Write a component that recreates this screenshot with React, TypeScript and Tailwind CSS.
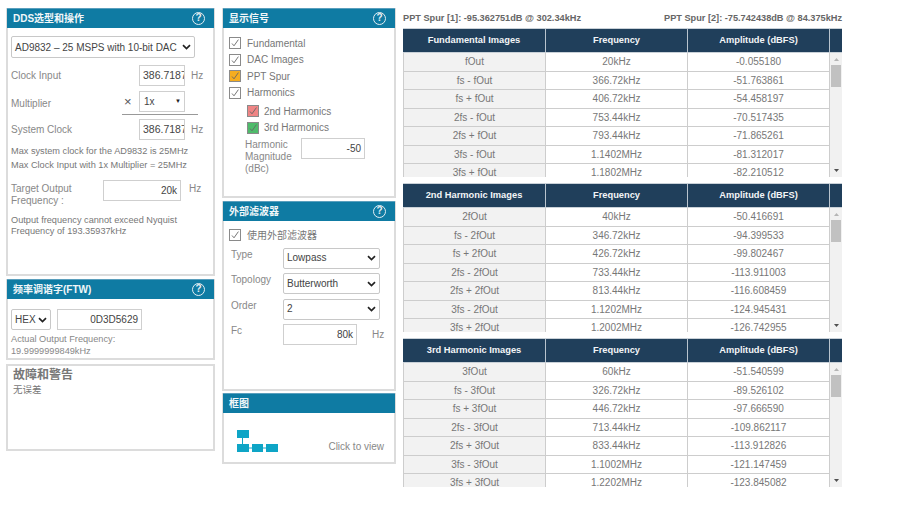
import React from "react"

const font = "font-['Liberation_Sans','Noto_Sans_CJK_SC',sans-serif]"

const tables = [
  {
    title: "Fundamental Images",
    rows: [
      ["fOut", "20kHz", "-0.055180"],
      ["fs - fOut", "366.72kHz", "-51.763861"],
      ["fs + fOut", "406.72kHz", "-54.458197"],
      ["2fs - fOut", "753.44kHz", "-70.517435"],
      ["2fs + fOut", "793.44kHz", "-71.865261"],
      ["3fs - fOut", "1.1402MHz", "-81.312017"],
      ["3fs + fOut", "1.1802MHz", "-82.210512"],
    ],
  },
  {
    title: "2nd Harmonic Images",
    rows: [
      ["2fOut", "40kHz", "-50.416691"],
      ["fs - 2fOut", "346.72kHz", "-94.399533"],
      ["fs + 2fOut", "426.72kHz", "-99.802467"],
      ["2fs - 2fOut", "733.44kHz", "-113.911003"],
      ["2fs + 2fOut", "813.44kHz", "-116.608459"],
      ["3fs - 2fOut", "1.1202MHz", "-124.945431"],
      ["3fs + 2fOut", "1.2002MHz", "-126.742955"],
    ],
  },
  {
    title: "3rd Harmonic Images",
    rows: [
      ["3fOut", "60kHz", "-51.540599"],
      ["fs - 3fOut", "326.72kHz", "-89.526102"],
      ["fs + 3fOut", "446.72kHz", "-97.666590"],
      ["2fs - 3fOut", "713.44kHz", "-109.862117"],
      ["2fs + 3fOut", "833.44kHz", "-113.912826"],
      ["3fs - 3fOut", "1.1002MHz", "-121.147459"],
      ["3fs + 3fOut", "1.2202MHz", "-123.845082"],
    ],
  },
]

function Help() {
  return (
    <span className="flex h-[13px] w-[13px] items-center justify-center rounded-full border-[1.5px] border-[#e4eef3] text-[10px] font-bold leading-none text-[#e4eef3]">
      ?
    </span>
  )
}

function Panel({
  title,
  help = true,
  className,
  children,
}: {
  title: string
  help?: boolean
  className: string
  children: React.ReactNode
}) {
  return (
    <div className={`flex flex-col border-x-2 border-b-2 border-[#dcdcdc] ${className}`}>
      <div className="-mx-[1px] flex h-[20px] shrink-0 items-center justify-between border-t border-[#5a9fbd] bg-[#0f7ba3] pb-[1px] pl-[6px] pr-[9px] text-[10px] font-bold text-[#f2f7f9]">
        <span>{title}</span>
        {help && <Help />}
      </div>
      {children}
    </div>
  )
}

function Chevron() {
  return (
    <svg width="9" height="6" viewBox="0 0 9 6" className="shrink-0">
      <path d="M1 1.2 L4.5 4.6 L8 1.2" fill="none" stroke="#222" strokeWidth="1.7" />
    </svg>
  )
}

function Select({ value, className }: { value: string; className: string }) {
  return (
    <div
      className={`flex h-[21px] items-center justify-between whitespace-nowrap rounded-[2px] border border-[#c8c8c8] bg-white pl-[3px] pr-[3px] text-[10px] text-[#444] ${className}`}
    >
      <span>{value}</span>
      <Chevron />
    </div>
  )
}

function Input({ value, className }: { value: string; className: string }) {
  return (
    <div
      className={`flex h-[21px] items-center justify-end overflow-hidden whitespace-nowrap border border-[#cfcfcf] bg-white pr-[3px] text-[10px] text-[#444] ${className}`}
    >
      {value}
    </div>
  )
}

// the clock boxes are too narrow for their value, the last digit gets cut
function ClockInput({ value }: { value: string }) {
  return (
    <div className="flex h-[21px] w-[46px] items-center border border-[#cfcfcf] bg-white pl-[3px] text-[10.5px] text-[#444]">
      <span className="w-[41px] overflow-hidden whitespace-nowrap">{value}</span>
    </div>
  )
}

function Check({ color = "bg-white", label, gap = "gap-[6px]" }: { color?: string; label: string; gap?: string }) {
  return (
    <div className={`flex h-[16.5px] items-center text-[10px] text-[#777] ${gap}`}>
      <span className={`flex h-[12px] w-[12px] items-center justify-center border border-[#8a8a8a] ${color}`}>
        <svg width="10" height="10" viewBox="0 0 10 10">
          <path d="M2 5.5 L4 7.8 L8.4 1.6" fill="none" stroke="#666" strokeWidth="0.9" />
        </svg>
      </span>
      {label}
    </div>
  )
}

function FilterRow({ label, children }: { label: string; children: React.ReactNode }) {
  return (
    <div className="flex h-[25.5px] text-[10px] leading-[14px] text-[#888]">
      <span className="w-[52px]">{label}</span>
      {children}
    </div>
  )
}

function Scrollbar() {
  return (
    <div className="flex w-[12px] flex-col items-center bg-[#f1f1f1]">
      <svg width="7" height="5" viewBox="0 0 7 5" className="mt-[4px] shrink-0">
        <path d="M3.5 1 L6 4 H1 Z" fill="#b5b5b5" />
      </svg>
      <div className="mt-[3px] h-[22px] w-[10px] bg-[#c1c1c1]" />
      <div className="flex-1" />
      <svg width="7" height="5" viewBox="0 0 7 5" className="mb-[4px] shrink-0">
        <path d="M1 1 H6 L3.5 4 Z" fill="#505050" />
      </svg>
    </div>
  )
}

function ImageTable({ title, rows }: { title: string; rows: string[][] }) {
  return (
    <div className="w-[439px]">
      <div className="flex h-[25px] border-y border-[#c9d1d8] bg-[#203f5b] text-[9.3px] font-bold text-[#f3f5f7]">
        <div className="flex w-[143px] items-center justify-center border-r border-[#b9c4ce]">{title}</div>
        <div className="flex w-[142px] items-center justify-center border-r border-[#b9c4ce]">Frequency</div>
        <div className="flex w-[142px] items-center justify-center border-r border-[#b9c4ce]">Amplitude (dBFS)</div>
        <div className="w-[12px]" />
      </div>
      <div className="flex h-[124px]">
        <div className="w-[427px] overflow-hidden">
          {rows.map((r) => (
            <div key={r[0]} className="flex h-[18.5px] border-b border-[#cdcdcd] text-[10px] text-[#777]">
              <div className="flex w-[143px] items-center justify-center border-l border-r border-[#cdcdcd] bg-[#f2f2f2]">
                {r[0]}
              </div>
              <div className="flex w-[142px] items-center justify-center border-r border-[#cdcdcd]">{r[1]}</div>
              <div className="flex w-[142px] items-center justify-center border-r border-[#cdcdcd]">{r[2]}</div>
            </div>
          ))}
        </div>
        <Scrollbar />
      </div>
    </div>
  )
}

export default function App() {
  return (
    <div className={`flex h-[513px] w-[900px] gap-[7px] overflow-hidden bg-white pl-[6px] pt-[8px] ${font}`}>
      {/* Left column */}
      <div className="flex w-[209px] flex-col">
        <Panel title="DDS选型和操作" className="h-[268px]">
          <div className="flex flex-col px-[3px] pt-[8px]">
            <Select value="AD9832 – 25 MSPS with 10-bit DAC" className="h-[22px] w-[184px]" />
            <div className="mt-[7px] flex h-[21px] items-center text-[10px] text-[#888]">
              <span className="w-[128px]">Clock Input</span>
              <ClockInput value="386.7187" />
              <span className="ml-[6px]">Hz</span>
            </div>
            <div className="mt-[5px] flex h-[21px] items-center text-[10px] text-[#888]">
              <span className="w-[113px] pt-[3px]">Multiplier</span>
              <span className="w-[15px] text-[13px] leading-none text-[#555]">×</span>
              <div className="flex h-[21px] w-[46px] items-center justify-between border border-[#cfcfcf] bg-white pl-[4px] pr-[3px] text-[10px] text-[#444]">
                1x
                <span className="text-[6px] text-[#222]">▼</span>
              </div>
            </div>
            <div className="ml-[111px] mt-[2px] h-px w-[76px] bg-[#999]" />
            <div className="mt-[4px] flex h-[21px] items-center text-[10px] text-[#888]">
              <span className="w-[128px]">System Clock</span>
              <ClockInput value="386.7187" />
              <span className="ml-[6px]">Hz</span>
            </div>
            <div className="mt-[5px] text-[9.2px] leading-[13.5px] text-[#777]">
              Max system clock for the AD9832 is 25MHz
              <br />
              Max Clock Input with 1x Multiplier = 25MHz
            </div>
            <div className="mt-[8px] flex text-[10px] leading-[11.5px] text-[#888]">
              <span className="w-[92px] pt-[3px]">
                Target Output
                <br />
                Frequency :
              </span>
              <Input value="20k" className="w-[78px]" />
              <span className="ml-[8px] pt-[3px]">Hz</span>
            </div>
            <div className="mt-[9px] text-[9.2px] leading-[11px] text-[#777]">
              Output frequency cannot exceed Nyquist
              <br />
              Frequency of 193.35937kHz
            </div>
          </div>
        </Panel>
        <Panel title="频率调谐字(FTW)" className="mt-[3px] h-[81px]">
          <div className="flex flex-col px-[3px] pt-[10px]">
            <div className="flex gap-[6px]">
              <Select value="HEX" className="w-[40px]" />
              <Input value="0D3D5629" className="w-[85px]" />
            </div>
            <div className="mt-[3px] text-[9.2px] leading-[12px] text-[#888]">
              Actual Output Frequency:
              <br />
              19.9999999849kHz
            </div>
          </div>
        </Panel>
        <div className="mt-[4px] h-[87px] border-2 border-[#dcdcdc] px-[5px] pt-[2px]">
          <div className="text-[12px] font-bold leading-[15px] text-[#777]">故障和警告</div>
          <div className="text-[9.5px] leading-[13px] text-[#777]">无误差</div>
        </div>
      </div>

      {/* Middle column */}
      <div className="flex w-[174px] flex-col">
        <Panel title="显示信号" className="h-[190px]">
          <div className="flex flex-col pl-[5px] pt-[7px]">
            <Check label="Fundamental" />
            <Check label="DAC Images" />
            <Check label="PPT Spur" color="bg-[#f5ad1f]" />
            <Check label="Harmonics" />
            <div className="mt-[2px] flex flex-col pl-[18px]">
              <Check label="2nd Harmonics" color="bg-[#ef8585]" gap="gap-[5px]" />
              <Check label="3rd Harmonics" color="bg-[#4fbb6b]" gap="gap-[5px]" />
            </div>
            <div className="mt-[2px] flex pl-[16px]">
              <span className="w-[56px] pt-[1px] text-[10px] leading-[12px] text-[#888]">
                Harmonic
                <br />
                Magnitude
                <br />
                (dBc)
              </span>
              <Input value="-50" className="w-[64px]" />
            </div>
          </div>
        </Panel>
        <Panel title="外部滤波器" className="mt-[3px] h-[190px]">
          <div className="flex flex-col pl-[7px] pt-[6px]">
            <div className="-ml-[2px]">
              <Check label="使用外部滤波器" />
            </div>
            <div className="mt-[4px] flex flex-col">
              <FilterRow label="Type">
                <Select value="Lowpass" className="w-[97px]" />
              </FilterRow>
              <FilterRow label="Topology">
                <Select value="Butterworth" className="w-[97px]" />
              </FilterRow>
              <FilterRow label="Order">
                <Select value="2" className="w-[97px]" />
              </FilterRow>
              <FilterRow label="Fc">
                <Input value="80k" className="w-[74px]" />
                <span className="ml-[15px] pt-[4px]">Hz</span>
              </FilterRow>
            </div>
          </div>
        </Panel>
        <Panel title="框图" help={false} className="mt-[2px] h-[71px]">
          <div className="flex items-end justify-between pl-[13px] pr-[10px] pt-[17px]">
            <svg width="41" height="22" viewBox="0 0 41 22">
              <g fill="#0ea5c6">
                <rect x="0" y="0" width="12" height="8" />
                <rect x="0" y="14" width="12" height="8" />
                <rect x="15" y="14" width="11" height="8" />
                <rect x="29" y="14" width="12" height="8" />
              </g>
              <path d="M5.5 8 V14 M12 18 H15 M26 18 H29" stroke="#0ea5c6" strokeWidth="1" />
            </svg>
            <span className="text-[10px] leading-[10px] text-[#888]">Click to view</span>
          </div>
        </Panel>
      </div>

      {/* Right column */}
      <div className="flex w-[439px] flex-col">
        <div className="flex h-[20px] w-[439px] items-center justify-between pt-[1px] text-[9.2px] font-bold text-[#666]">
          <span>PPT Spur [1]: -95.362751dB @ 302.34kHz</span>
          <span>PPT Spur [2]: -75.742438dB @ 84.375kHz</span>
        </div>
        <div className="flex flex-col gap-[6px]">
          {tables.map((t) => (
            <ImageTable key={t.title} title={t.title} rows={t.rows} />
          ))}
        </div>
      </div>
    </div>
  )
}
